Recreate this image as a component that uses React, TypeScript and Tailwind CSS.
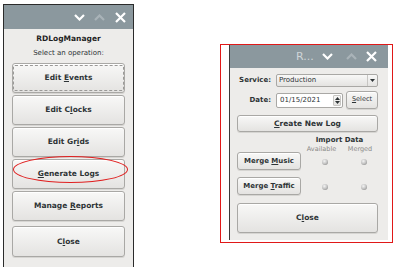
import React from "react";

const F = "font-['DejaVu_Sans',sans-serif]";

function U({ children }: { children: React.ReactNode }) {
  return <span className="underline underline-offset-[1px] decoration-[1px]">{children}</span>;
}

function Btn({ children, className = "" }: { children: React.ReactNode; className?: string }) {
  return (
    <div
      className={`flex items-center justify-center rounded-[3px] border border-[#a9a8a5] bg-linear-to-b from-[#f8f8f7] to-[#e4e3e1] shadow-[inset_0_1px_0_#ffffff,0_1px_0_#d6d5d2] text-[#2e3436] font-bold ${className}`}
    >
      {children}
    </div>
  );
}

function Chevron({ up, dim }: { up?: boolean; dim?: boolean }) {
  return (
    <svg width="11" height="7" viewBox="0 0 11 7" className="shrink-0">
      <polyline
        points={up ? "1,6 5.5,1.5 10,6" : "1,1 5.5,5.5 10,1"}
        fill="none"
        stroke={dim ? "#a9b3b8" : "#ffffff"}
        strokeWidth="2.2"
      />
    </svg>
  );
}

function Close() {
  return (
    <svg width="11" height="11" viewBox="0 0 11 11" className="shrink-0">
      <path d="M1 1 L10 10 M10 1 L1 10" stroke="#ffffff" strokeWidth="2.2" fill="none" />
    </svg>
  );
}

function Led() {
  return (
    <div className="w-[6px] h-[6px] rounded-full bg-[radial-gradient(circle_at_40%_35%,#f4f4f4_0%,#bdbdbd_55%,#6a6a6a_100%)]" />
  );
}

export default function App() {
  return (
    <div className={`relative w-[415px] h-[267px] bg-white flex items-start pt-[4px] pl-[3px] ${F}`}>
      {/* Left window */}
      <div className="w-[131px] h-[263px] flex flex-col border-t border-l border-r border-[#2b2b2b] bg-[#edecea]">
        <div className="h-[24px] bg-[#8b989e] flex items-center justify-end pr-[7px]">
          <Chevron />
          <div className="ml-[9px]"><Chevron up dim /></div>
          <div className="ml-[10px]"><Close /></div>
        </div>
        <div className="flex flex-col items-stretch px-[8px]">
          <div className="text-center text-[7.5px] font-bold text-[#1f1f1f] mt-[5px] leading-[10px]">RDLogManager</div>
          <div className="text-center text-[7px] text-[#2e3436] mt-[4px] leading-[10px]">Select an operation:</div>
          <div className="flex flex-col gap-[2px] mt-[5px]">
            <Btn className="h-[30px] text-[7.5px]">
              <div className="flex items-center justify-center w-[111px] h-[26px] border border-dashed border-[#9a9997] rounded-[2px]">
                <span>Edit <U>E</U>vents</span>
              </div>
            </Btn>
            <Btn className="h-[30px] text-[7.5px]"><span>Edit C<U>l</U>ocks</span></Btn>
            <Btn className="h-[30px] text-[7.5px]"><span>Edit Gr<U>i</U>ds</span></Btn>
            <Btn className="h-[30px] text-[7.5px]"><span><U>G</U>enerate Logs</span></Btn>
            <Btn className="h-[30px] text-[7.5px]"><span>Manage <U>R</U>eports</span></Btn>
            <Btn className="h-[31px] text-[7.5px] mt-[3px]"><span>C<U>l</U>ose</span></Btn>
          </div>
        </div>
      </div>

      {/* Red annotation ellipse */}
      <div className="absolute left-[13px] top-[156px] w-[115px] h-[27px] rounded-[50%] border border-[#e02020]" />

      {/* Right window with red frame */}
      <div className="ml-[86px] mt-[40px] w-[173px] h-[199px] border-[1.5px] border-[#e01818] pl-[8px] pr-[4px] pb-[2px] flex flex-col">
        <div className="flex-1 flex flex-col bg-[#edecea] border-l border-[#3a3a3a]">
          <div className="h-[23px] bg-[#8b989e] flex items-center pr-[11px]">
            <div className="ml-[66px] text-[11px] text-[#cfd5d8] leading-none">R...</div>
            <div className="ml-auto flex items-center">
              <Chevron />
              <div className="ml-[13px]"><Chevron up dim /></div>
              <div className="ml-[9px]"><Close /></div>
            </div>
          </div>
          <div className="flex flex-col pl-[7px] pr-[10px] pt-[6px]">
            <div className="flex items-center h-[13px]">
              <div className="w-[34px] text-right text-[7px] font-bold text-[#2e3436] leading-none">Service:</div>
              <div className="ml-[5px] flex-1 h-[13px] flex items-center border border-[#a9a8a5] rounded-[2px] bg-linear-to-b from-[#f8f8f7] to-[#e4e3e1]">
                <span className="pl-[2px] text-[7px] text-[#2e3436] leading-none">Production</span>
                <div className="ml-auto h-full w-[10px] border-l border-[#c7c6c3] flex items-center justify-center">
                  <svg width="5" height="3" viewBox="0 0 5 3"><polygon points="0,0 5,0 2.5,3" fill="#2e3436" /></svg>
                </div>
              </div>
            </div>
            <div className="flex items-center mt-[4px] h-[18px]">
              <div className="w-[34px] text-right text-[7px] font-bold text-[#2e3436] leading-none">Date:</div>
              <div className="ml-[5px] w-[67px] h-[15px] flex items-center border border-[#a9a8a5] rounded-[2px] bg-white">
                <span className="pl-[3px] text-[7px] text-[#2e3436] leading-none">01/15/2021</span>
                <div className="ml-auto mr-[1px] h-[11px] w-[8px] flex flex-col items-center justify-center gap-[1px] bg-linear-to-b from-[#f8f8f7] to-[#e4e3e1] border border-[#c7c6c3] rounded-[1px]">
                  <svg width="5" height="3" viewBox="0 0 5 3"><polygon points="0,3 5,3 2.5,0" fill="#2e3436" /></svg>
                  <svg width="5" height="3" viewBox="0 0 5 3"><polygon points="0,0 5,0 2.5,3" fill="#2e3436" /></svg>
                </div>
              </div>
              <Btn className="ml-[3px] w-[32px] h-[18px] text-[6.5px] !font-normal"><span><U>S</U>elect</span></Btn>
            </div>
            <Btn className="mt-[6px] h-[17px] text-[7.5px]"><span><U>C</U>reate New Log</span></Btn>
            <div className="flex mt-[4px]">
              <div className="w-[64px]" />
              <div className="flex-1 flex flex-col items-center">
                <div className="text-[7px] font-bold text-[#2e3436] leading-[9px]">Import Data</div>
                <div className="flex w-full justify-around text-[6.5px] text-[#8a8a88] leading-[8px]">
                  <span>Available</span>
                  <span>Merged</span>
                </div>
              </div>
            </div>
            <div className="flex items-center mt-[-1px]">
              <Btn className="w-[64px] h-[18px] text-[7px]"><span>Merge <U>M</U>usic</span></Btn>
              <div className="flex items-center pt-[2px] pl-[21px]"><Led /><div className="ml-[33px]"><Led /></div></div>
            </div>
            <div className="flex items-center mt-[7px]">
              <Btn className="w-[64px] h-[18px] text-[7px]"><span>Merge <U>T</U>raffic</span></Btn>
              <div className="flex items-center pt-[2px] pl-[21px]"><Led /><div className="ml-[33px]"><Led /></div></div>
            </div>
            <Btn className="mt-[8px] h-[30px] text-[7.5px]"><span>C<U>l</U>ose</span></Btn>
          </div>
        </div>
      </div>
    </div>
  );
}
